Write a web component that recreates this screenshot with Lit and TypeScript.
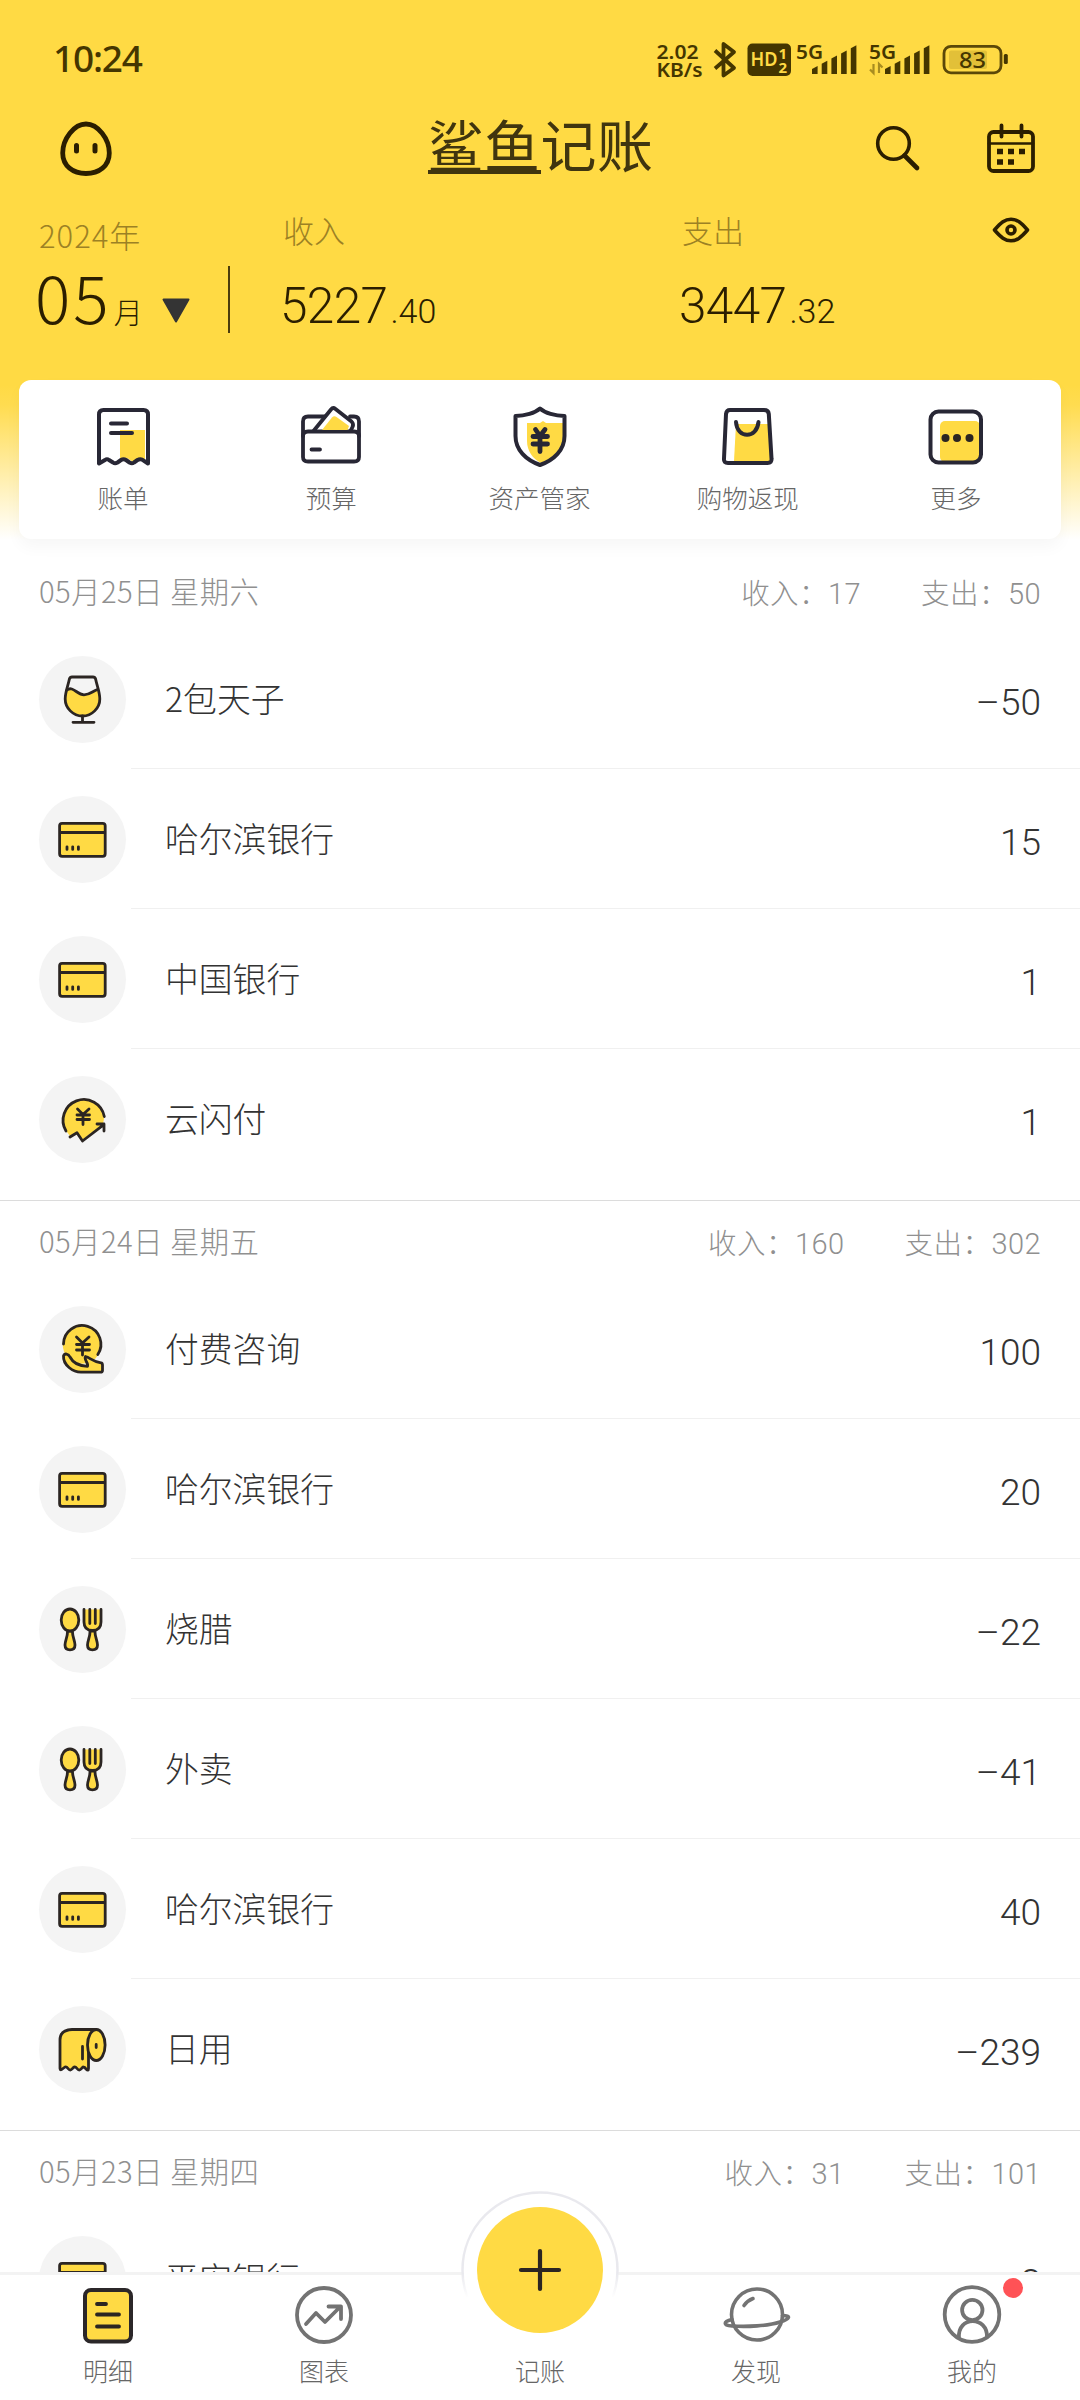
import { LitElement, html, css, svg } from "lit";
import { customElement } from "lit/decorators.js";

const Y = "#ffda44";
const D = "#2b2522";

interface Entry { icon: string; name: string; amount: string; }
interface Day { date: string; income: string; expense: string; entries: Entry[]; }

const bank = (amount: string, name = "哈尔滨银行"): Entry => ({ icon: "card", name, amount });

const days: Day[] = [
  { date: "05月25日 星期六", income: "17", expense: "50", entries: [
    { icon: "wine", name: "2包天子", amount: "–50" },
    bank("15"), bank("1", "中国银行"),
    { icon: "invest", name: "云闪付", amount: "1" } ] },
  { date: "05月24日 星期五", income: "160", expense: "302", entries: [
    { icon: "hand", name: "付费咨询", amount: "100" },
    bank("20"),
    { icon: "food", name: "烧腊", amount: "–22" },
    { icon: "food", name: "外卖", amount: "–41" },
    bank("40"),
    { icon: "paper", name: "日用", amount: "–239" } ] },
  { date: "05月23日 星期四", income: "31", expense: "101", entries: [bank("8", "平安银行")] },
];

/* Category icons, drawn on the 87px disc */
const icons: Record<string, unknown> = {
  card: svg`<g stroke=${D} stroke-width="2.8" stroke-linejoin="round"><rect x="20.600" y="27.300" width="45.600" height="33" rx="2.500" fill=${Y}/><path d="M20.600 36.500H66.200"/><path stroke-linecap="round" d="M28 50.800v2.600M33.700 50.800v2.600M39.400 50.800v2.600"/></g>`,
  wine: svg`<path fill=${Y} d="M27 33C33 29 38 38.500 45 38.500C52 38.500 54 34 59.500 34C63 47 56 60 43.500 60C31 60 24 47 27 33Z"/><g fill="none" stroke=${D} stroke-width="2.800" stroke-linecap="round" stroke-linejoin="round"><path d="M33 21H54Q56 21 56.600 23C58 30 60.800 36 60.800 43C60.800 52 53 60 43.500 60C34 60 26.200 52 26.200 43C26.200 36 29 30 30.400 23Q31 21 33 21Z"/><path d="M28 34C34 29.500 38 38.800 45 38.800C51 38.800 53 35.500 58.500 33.500M43.500 60V66.300M34 66.300H55"/></g>`,
  invest: svg`<path fill=${Y} d="M27.600 55.500A20.800 20.800 0 1 1 65.500 40L64 48L43 64L37 57.500L31 60Z"/><g fill="none" stroke=${D} stroke-width="2.800" stroke-linecap="round" stroke-linejoin="round"><path d="M27 55A20.800 20.800 0 1 1 65.300 40.500"/><path d="M31 61L38 56.800L43.500 65L64.500 48.800M58 48H65V55"/><path d="M38.500 33L44 38.500L50 33M38 39H50.500M38 43.500H50.500M44 38.500V48.500"/></g>`,
  hand: svg`<circle cx="43" cy="38.500" r="19.300" fill=${Y}/><g fill="none" stroke=${D} stroke-width="2.800" stroke-linecap="round" stroke-linejoin="round"><path d="M24.500 38A18.700 18.700 0 1 1 58.800 48.500"/><path d="M37.500 31L43.500 37L50 31M37.500 38.500H50.500M37.500 44H50.500M43.500 37.500V49"/><path fill=${Y} d="M24.500 50C25.500 47 29.500 47.500 31 51C34 57 39 60 48.500 60.300C50 57.500 44.500 53.500 46.500 50.500C51 51.500 54 56 62 56.800Q63.500 57 63.500 59V64.500Q63.500 66.200 61.500 66.200H42C34 66.200 24 59 24.500 50Z"/></g>`,
  food: svg`<g fill=${Y} stroke=${D} stroke-width="2.800" stroke-linecap="round" stroke-linejoin="round"><path d="M28.600 45H33.400C33.400 51 36 55 36 59Q36 63.800 31 63.800Q26 63.800 26 59C26 55 28.600 51 28.600 45Z"/><ellipse cx="31" cy="34" rx="8.800" ry="11"/><path d="M51.100 45H55.900C55.900 51 58.500 55 58.500 59Q58.500 63.800 53.500 63.800Q48.500 63.800 48.500 59C48.500 55 51.100 51 51.100 45Z"/><path d="M45 23.500V36Q45 44.500 53.500 44.500Q62 44.500 62 36V23.500"/><path fill="none" d="M50.800 23.500V37.500M56.300 23.500V37.500"/></g>`,
  paper: svg`<g fill=${Y} stroke=${D} stroke-width="2.800" stroke-linecap="round" stroke-linejoin="round"><path d="M57 23.500H33Q21 24 21 34V62.500Q21 65 24 62.500L26 61Q27.500 60.500 29 62.500Q31.200 65.500 33.500 62.500L35 61Q36.500 60.500 38 62.500Q40.200 65.500 42.500 62.500L44 61Q46 61 47 63Q49.500 65.500 49.500 62.500V44"/><ellipse cx="57.300" cy="39" rx="8.800" ry="15.500"/><path fill="none" d="M43.500 40.500V53M57.200 38.500V41.500"/></g>`,
};

const shortcuts = [
  { label: "账单", art: svg`<path fill=${Y} d="M30 27H55V57L49 55L43 59L37 55L30 58Z"/><g fill="none" stroke="#282735" stroke-width="4" stroke-linecap="round" stroke-linejoin="round"><path d="M9 60.500V11.500Q9 7 13.500 7H53.500Q58 7 58 11.500V60.500L52.500 56.800Q50 55.500 47.500 57L44 59.500Q42 61 39.500 59.500L36 57Q33.500 55.500 31 57L27.500 59.500Q25 61 23 59.500L19 57Q17 55.500 15 57Z"/><path d="M21 20.500H37M21 30H42"/></g>` },
  { label: "预算", art: svg`<g fill="none" stroke="#282735" stroke-width="3.800" stroke-linecap="round" stroke-linejoin="round"><path d="M28 13.500H10Q5 13.500 5 18.500V54Q5 58.500 10 58.500H56Q61 58.500 61 54V18.500Q61 13.500 56 13.500H52"/><path fill="#fff" d="M15.500 28L33 6.500Q35 4 37.500 6L53.500 18.500Q56 21 54.500 24L52.500 28"/><path d="M5 33Q5 28.500 10 28.500H56Q61 28.500 61 33M13.500 46.500H22"/></g><path fill=${Y} d="M24 27L34 14.500Q36 12.500 38.500 14L51 23L49.500 27Z"/>` },
  { label: "资产管家", art: svg`<path fill=${Y} d="M21 20H34L37 18L40 20H57V32C57 48 45 56 35 60C27 56 21 48 21 38Z"/><g fill="none" stroke="#282735" stroke-width="4" stroke-linejoin="round" stroke-linecap="round"><path d="M34 5.500C29 10 19 13 9.500 13V33C9.500 47 20 57 34 62C48 57 58.500 47 58.500 33V13C49 13 39 10 34 5.500Z"/><path stroke-width="4.800" d="M29.500 26.500L34 33L39 26.500M27 33.500H41.500M27 41H41.500M34 34V48.500"/></g>` },
  { label: "购物返现", art: svg`<path fill=${Y} d="M22 21H56L57 58H20Z"/><g fill="none" stroke="#282735" stroke-width="4" stroke-linejoin="round" stroke-linecap="round"><path d="M16 7H50Q54.500 7 54.800 11L57.500 55.500Q58 60 53.500 60H14Q9.500 60 10 55.500L12 11Q12.500 7 16 7Z"/><path d="M22 19C23 36 43 36 44.500 19"/></g>` },
  { label: "更多", art: svg`<rect x="18" y="18" width="40" height="41" rx="5" fill=${Y}/><rect x="8.500" y="8.500" width="50.500" height="51" rx="8" fill="none" stroke="#282735" stroke-width="4"/><g fill="#2b2522"><circle cx="23.500" cy="35" r="4"/><circle cx="35" cy="35" r="4"/><circle cx="47.500" cy="35" r="4"/></g>` },
];

const tabs = [
  { label: "明细", art: svg`<rect x="9" y="7" width="46" height="51.500" rx="6" fill=${Y} stroke="#2b2729" stroke-width="4"/><path fill="none" stroke="#2b2522" stroke-width="3.800" stroke-linecap="round" d="M21 21H30M21 31.500H43M21 43.500H43"/>` },
  { label: "图表", art: svg`<g fill="none" stroke="#737373" stroke-width="3.800" stroke-linecap="round" stroke-linejoin="round"><circle cx="32" cy="32" r="27"/><path d="M14 41L24 30L33 39L48 24M36.500 23.500H49V36"/></g>` },
  { label: "记账", art: null },
  { label: "发现", art: svg`<g fill="none" stroke="#737373" stroke-width="3.600" stroke-linecap="round"><circle cx="33" cy="31.500" r="25.500"/><path d="M8 36.500C-1 38.500-1 42.500 8 43C23 44 44 43 56 39C66 36 67.500 32.500 58.500 32.500"/><path d="M20 22.500Q23.500 17.500 29 15.500"/></g>` },
  { label: "我的", art: svg`<g fill="none" stroke="#737373" stroke-width="3.800"><circle cx="32" cy="31.500" r="27.300"/><circle cx="32.300" cy="27" r="10.200"/><path d="M19 55C17 32.500 48 32.500 47 54.500"/></g>` },
];

@customElement("app-root")
export class AppRoot extends LitElement {
  static styles = css`
    :host { display: block; width: 1080px; height: 2400px; overflow: hidden; position: relative; background: #fff; color: #333; font-family: "Noto Sans CJK SC", sans-serif; font-weight: 300; }
    * { box-sizing: border-box; }
    svg { display: block; overflow: visible; flex: none; }
    .page { display: flex; flex-direction: column; height: 2400px; }
    .top { flex: none; height: 551px; background: linear-gradient(#ffda44 0 385px, #ffdc50 405px, #fff 540px); color: #2b1e00; }
    .status { display: flex; height: 104px; padding: 12px 70px 0 53px; justify-content: space-between; align-items: center; color: #453600; }
    .clock { font: 500 37px/48px "Noto Sans", sans-serif; letter-spacing: -1.2px; }
    .title-bar { display: grid; grid-template-columns: 1fr auto 1fr; height: 92px; padding: 0 45px 3px 60px; align-items: center; }
    .brand { display: flex; font-size: 56px; line-height: 54px; font-weight: 400; letter-spacing: .5px; color: #40350f; height: 60px; margin: -6px 14px 0 0; }
    .under { border-bottom: 4px solid #40350f; height: 58px; }
    .tools { display: flex; justify-content: flex-end; gap: 69px; align-items: center; }
    .summary { display: flex; height: 184px; padding: 14px 0 0; }
    .month { width: 228px; height: 122px; padding: 5px 0 0 39px; }
    .label { font-size: 31px; line-height: 40px; color: #9c8124; }
    .year { letter-spacing: 1px; }
    .month-pick { display: flex; align-items: baseline; height: 74px; }
    .num { font-size: 66px; line-height: 80px; letter-spacing: 3px; margin-left: -4px; }
    .unit { font-size: 29px; margin-left: 2px; }
    .arrow { margin-left: 19px; }
    .rule { width: 2px; height: 67px; margin: 56px 54px 0 0; background: #4b3c0d; }
    .sum { width: 399px; margin-left: -1px; margin-right: 1px; }
    .money { font: 300 49.500px/60px Roboto, sans-serif; margin: 26px 0 0 -3px; letter-spacing: -.6px; }
    .cents { font-size: 34px; letter-spacing: 0; margin-left: 3px; }
    .eye { margin: 7px 0 0 -90px; }
    .card { display: grid; grid-template-columns: repeat(5, 1fr); width: 1042px; height: 159px; margin: 0 19px; border-radius: 12px; background: #fff; box-shadow: 0 8px 16px rgba(0,0,0,.035); padding: 23px 1px 0 0; }
    .cell { display: flex; flex-direction: column; align-items: center; }
    .caption { font-size: 25.500px; line-height: 32px; color: #666; margin-top: 11px; }
    .day { flex: none; border-bottom: 1px solid #dcdcdc; padding-bottom: 12px; }
    .day-head { display: flex; height: 77px; padding: 1px 39px 0; align-items: center; justify-content: space-between; color: #909090; font-size: 29.300px; line-height: 36px; letter-spacing: .45px; }
    .totals { display: flex; gap: 60px; font-size: 28.500px; padding-top: 5px; }
    .figure { font: 300 29px/36px Roboto, sans-serif; }
    .entry { display: flex; align-items: center; height: 140px; padding: 0 39px; position: relative; }
    .entry + .entry .body::before { content: ""; position: absolute; top: 0; left: 131px; right: 0; height: 1px; background: #f0f0f0; }
    .disc { width: 87px; height: 87px; border-radius: 50%; background: #f4f4f4; margin-top: 2px; }
    .body { flex: 1; display: flex; justify-content: space-between; align-items: center; margin-left: 39px; }
    .name { font-size: 33.800px; line-height: 48px; margin-top: -1px; }
    .amount { font: 300 37px/48px Roboto, sans-serif; margin-top: 9px; }
    .nav { position: absolute; left: 0; right: 0; bottom: 0; height: 128px; background: #fff; border-top: 3px solid #f3f3f3; display: grid; grid-template-columns: repeat(5, 1fr); padding-top: 8px; }
    .tab { display: flex; flex-direction: column; align-items: center; position: relative; }
    .tab .caption { margin-top: 6px; font-size: 25px; }
    .slot { height: 65px; width: 64px; }
    .fab { position: absolute; left: 29px; top: -92px; }
    .dot { position: absolute; left: 138.500px; top: -5px; width: 20px; height: 20px; border-radius: 50%; background: #ff5256; }
    .st { font-family: "Noto Sans", sans-serif; font-weight: 600; }
    .bold { font-weight: 700; }
    .charge { font-family: "Noto Sans", sans-serif; font-weight: 500; }
  `;

  private status() {
    const bars = (x: number) => [0, 1, 2, 3, 4].map(i => svg`<path d="M${x + i * 9.700} ${67 - i * 5.200}l5.600-3V72H${x + i * 9.700}Z"/>`);
    return html`<svg width="354" height="48" viewBox="656 32 354 48" fill="#453600">
      <g class="st">
        <text x="656.500" y="57" font-size="20" textLength="42" lengthAdjust="spacingAndGlyphs">2.02</text>
        <text x="656.500" y="75" font-size="20" textLength="46" lengthAdjust="spacingAndGlyphs">KB/s</text>
        <text x="796" y="56.500" font-size="20" textLength="27" lengthAdjust="spacingAndGlyphs">5G</text>
        <text x="869" y="56.500" font-size="20" textLength="27" lengthAdjust="spacingAndGlyphs">5G</text>
      </g>
      <path d="M715 48.500L734 66L723.500 73.500V42L734 50L715 66.500" fill="none" stroke="#453600" stroke-width="3.800" stroke-linejoin="round"/>
      <rect x="747.500" y="41.500" width="43.500" height="32.500" rx="5"/>
      <g fill=${Y} class="st"><text x="750.500" y="64.300" font-size="20" textLength="27" lengthAdjust="spacingAndGlyphs">HD</text><text class="bold" x="778.500" y="56.500" font-size="15">1</text><text class="bold" x="778.500" y="70.500" font-size="15">2</text></g>
      ${bars(812)}${bars(885)}
      <path d="M873.500 62v9l-3.500-3.500M879 71v-9l3.500 3.500" fill="none" stroke="#a88c20" stroke-width="2.200"/>
      <rect x="944" y="44.300" width="57" height="26.500" rx="7" fill="none" stroke="#5b4808" stroke-width="2.800"/>
      <rect x="949" y="48.500" width="38" height="18.500" rx="2" fill="#e2c038"/>
      <rect x="1003.800" y="52" width="4" height="10" rx="1.500"/>
      <text class="charge" x="959" y="65.500" font-size="22.500" textLength="27" lengthAdjust="spacingAndGlyphs">83</text>
    </svg>`;
  }

  render() {
    return html`<div class="page">
      <header class="top">
        <div class="status"><span class="clock">10:24</span>${this.status()}</div>
        <div class="title-bar">
          <svg width="52" height="56" viewBox="0 0 52 56"><path d="M26 3C38 3 49.300 18 49.300 32C49.300 45 39 52.500 26 52.500S2.700 45 2.700 32C2.700 18 14 3 26 3Z" fill="none" stroke="#2b1e00" stroke-width="4.800"/><path d="M16.500 24.500v5.500M35 24.500v5.500" stroke="#2b1e00" stroke-width="5" stroke-linecap="round"/></svg>
          <div class="brand"><span class="under">鲨鱼</span><span>记账</span></div>
          <div class="tools">
            <svg width="44" height="48" viewBox="0 0 44 48" fill="none" stroke="#2b1e00" stroke-linecap="round"><circle cx="19.500" cy="18.500" r="15.800" stroke-width="3.600"/><path d="M30.500 30.500L43 43" stroke-width="4.600"/></svg>
            <svg width="48" height="50" viewBox="0 0 48 50" fill="none" stroke="#2b1e00" stroke-width="3.800" stroke-linecap="round"><rect x="2" y="8" width="44" height="39" rx="4.500"/><path d="M2 19.500H46" stroke-width="2.600"/><path d="M14.500 1.500V12.500M34.500 1.500V12.500"/><path d="M10 27.500h6M21 27.500h6M32 27.500h6M10 38h6M21 38h6" stroke-width="5.600" stroke-linecap="butt"/></svg>
          </div>
        </div>
        <div class="summary">
          <div class="month"><div class="label year">2024年</div><div class="month-pick"><span class="num">05</span><span class="unit">月</span><svg class="arrow" width="28" height="26" viewBox="0 0 28 26"><path d="M1.500 1.500H26.500L14 23.500Z" fill="#343434" stroke="#343434" stroke-width="2" stroke-linejoin="round"/></svg></div></div>
          <div class="rule"></div>
          <div class="sum"><div class="label">收入</div><div class="money">5227<span class="cents">.40</span></div></div>
          <div class="sum"><div class="label">支出</div><div class="money">3447<span class="cents">.32</span></div></div>
          <svg class="eye" width="38" height="26" viewBox="0 0 38 26" fill="none" stroke="#2b1e00" stroke-width="3.600"><path d="M2.500 13C9 5.500 13 2.200 19 2.200S29 5.500 35.500 13C29 20.500 25 23.800 19 23.800S9 20.500 2.500 13Z" stroke-linejoin="round"/><circle cx="19" cy="13" r="4"/></svg>
        </div>
        <div class="card">${shortcuts.map(s => html`<div class="cell"><svg width="67" height="67" viewBox="0 0 67 67">${s.art}</svg><div class="caption">${s.label}</div></div>`)}</div>
      </header>
      ${days.map(d => html`<section class="day">
        <div class="day-head"><span>${d.date}</span><div class="totals"><span>收入：<span class="figure">${d.income}</span></span><span>支出：<span class="figure">${d.expense}</span></span></div></div>
        ${d.entries.map(e => html`<div class="entry"><div class="disc"><svg width="87" height="87" viewBox="0 0 87 87">${icons[e.icon]}</svg></div><div class="body"><span class="name">${e.name}</span><span class="amount">${e.amount}</span></div></div>`)}
      </section>`)}
    </div>
    <nav class="nav">${tabs.map((t, i) => html`<div class="tab">
      ${t.art ? html`<svg width="64" height="65" viewBox="0 0 64 65">${t.art}</svg>` : html`<div class="slot"></div><svg class="fab" width="158" height="158" viewBox="0 0 158 158"><defs><linearGradient id="fade" x1="0" y1="0" x2="0" y2="1"><stop offset=".52" stop-color="#e9e9ee"/><stop offset=".68" stop-color="#fff"/></linearGradient></defs><circle cx="79" cy="79" r="77.500" fill="#fff" stroke="url(#fade)" stroke-width="2.500"/><circle cx="79" cy="79" r="63" fill=${Y}/><path d="M60 79H98M79 60V98" stroke="#2b2522" stroke-width="4.200" stroke-linecap="round"/></svg>`}
      <span class="caption">${t.label}</span>${i === 4 ? html`<i class="dot"></i>` : null}</div>`)}</nav>`;
  }
}
